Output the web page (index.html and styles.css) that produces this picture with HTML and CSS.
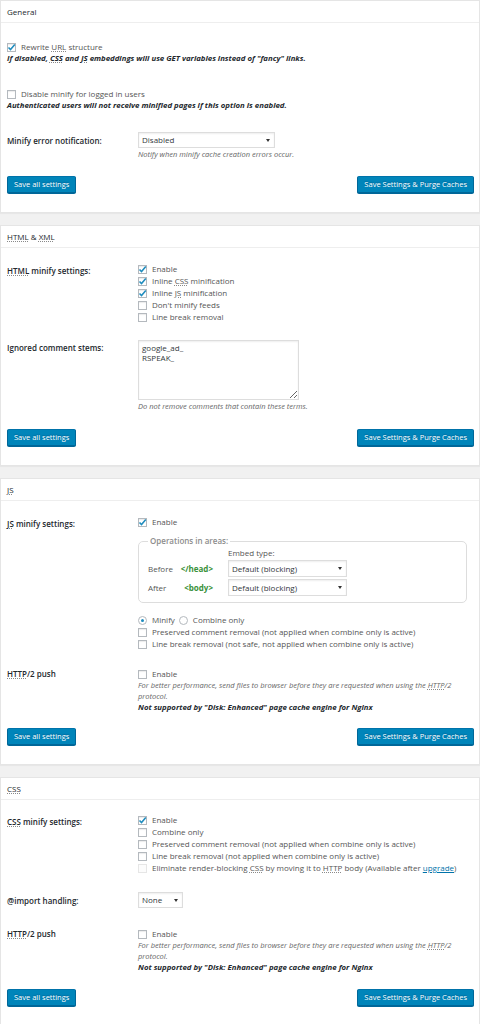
FILE: index.html
```html
<!DOCTYPE html>
<html lang="en">
<head>
<meta charset="utf-8">
<title>Minify settings</title>
<link rel="stylesheet" href="styles.css">
</head>
<body>

<section class="panel panel-general">
  <h3 class="panel-title">General</h3>
  <div class="panel-body">
    <div class="option">
      <label class="check"><span class="cb is-checked"><svg viewBox="0 0 9 9" aria-hidden="true"><path d="M1.5 4.5 3.5 6.6 7.8 1.4"/></svg></span><span>Rewrite <abbr>URL</abbr> structure</span></label>
      <p class="note-strong">If disabled, <abbr>CSS</abbr> and <abbr>JS</abbr> embeddings will use GET variables instead of "fancy" links.</p>
    </div>
    <div class="option">
      <label class="check"><span class="cb"></span><span>Disable minify for logged in users</span></label>
      <p class="note-strong">Authenticated users will not receive minified pages if this option is enabled.</p>
    </div>
    <div class="row row-select">
      <div class="row-label">Minify error notification:</div>
      <div class="row-field">
        <div class="select select-wide"><span>Disabled</span><i class="caret"></i></div>
        <p class="note">Notify when minify cache creation errors occur.</p>
      </div>
    </div>
    <div class="actions">
      <button class="btn" type="button">Save all settings</button>
      <button class="btn" type="button">Save Settings &amp; Purge Caches</button>
    </div>
  </div>
</section>

<section class="panel panel-html">
  <h3 class="panel-title"><abbr>HTML</abbr> &amp; <abbr>XML</abbr></h3>
  <div class="panel-body">
    <div class="row row-checks">
      <div class="row-label"><abbr>HTML</abbr> minify settings:</div>
      <div class="row-field">
        <label class="check"><span class="cb is-checked"><svg viewBox="0 0 9 9" aria-hidden="true"><path d="M1.5 4.5 3.5 6.6 7.8 1.4"/></svg></span><span>Enable</span></label>
        <label class="check"><span class="cb is-checked"><svg viewBox="0 0 9 9" aria-hidden="true"><path d="M1.5 4.5 3.5 6.6 7.8 1.4"/></svg></span><span>Inline <abbr>CSS</abbr> minification</span></label>
        <label class="check"><span class="cb is-checked"><svg viewBox="0 0 9 9" aria-hidden="true"><path d="M1.5 4.5 3.5 6.6 7.8 1.4"/></svg></span><span>Inline <abbr>JS</abbr> minification</span></label>
        <label class="check"><span class="cb"></span><span>Don't minify feeds</span></label>
        <label class="check"><span class="cb"></span><span>Line break removal</span></label>
      </div>
    </div>
    <div class="row row-textarea">
      <div class="row-label">Ignored comment stems:</div>
      <div class="row-field">
        <textarea class="stems" readonly>google_ad_
RSPEAK_</textarea>
        <p class="note">Do not remove comments that contain these terms.</p>
      </div>
    </div>
    <div class="actions">
      <button class="btn" type="button">Save all settings</button>
      <button class="btn" type="button">Save Settings &amp; Purge Caches</button>
    </div>
  </div>
</section>

<section class="panel panel-js">
  <h3 class="panel-title"><abbr>JS</abbr></h3>
  <div class="panel-body">
    <div class="row row-checks">
      <div class="row-label"><abbr>JS</abbr> minify settings:</div>
      <div class="row-field">
        <label class="check"><span class="cb is-checked"><svg viewBox="0 0 9 9" aria-hidden="true"><path d="M1.5 4.5 3.5 6.6 7.8 1.4"/></svg></span><span>Enable</span></label>
        <fieldset class="areas">
          <legend>Operations in areas:</legend>
          <div class="areas-grid">
            <span></span><span></span><span class="embed-head">Embed type:</span>
            <span>Before</span><span class="tag">&lt;/head&gt;</span><div class="select select-embed"><span>Default (blocking)</span><i class="caret"></i></div>
            <span>After</span><span class="tag">&lt;body&gt;</span><div class="select select-embed"><span>Default (blocking)</span><i class="caret"></i></div>
          </div>
        </fieldset>
        <div class="check radios">
          <label class="radio-opt"><span class="radio is-checked"></span><span>Minify</span></label>
          <label class="radio-opt"><span class="radio"></span><span>Combine only</span></label>
        </div>
        <label class="check"><span class="cb"></span><span>Preserved comment removal (not applied when combine only is active)</span></label>
        <label class="check"><span class="cb"></span><span>Line break removal (not safe, not applied when combine only is active)</span></label>
      </div>
    </div>
    <div class="row row-push">
      <div class="row-label"><abbr>HTTP</abbr>/2 push</div>
      <div class="row-field">
        <label class="check"><span class="cb"></span><span>Enable</span></label>
        <p class="note">For better performance, send files to browser before they are requested when using the <abbr>HTTP</abbr>/2 protocol.</p>
        <p class="note-strong">Not supported by "Disk: Enhanced" page cache engine for Nginx</p>
      </div>
    </div>
    <div class="actions">
      <button class="btn" type="button">Save all settings</button>
      <button class="btn" type="button">Save Settings &amp; Purge Caches</button>
    </div>
  </div>
</section>

<section class="panel panel-css">
  <h3 class="panel-title"><abbr>CSS</abbr></h3>
  <div class="panel-body">
    <div class="row row-checks">
      <div class="row-label"><abbr>CSS</abbr> minify settings:</div>
      <div class="row-field">
        <label class="check"><span class="cb is-checked"><svg viewBox="0 0 9 9" aria-hidden="true"><path d="M1.5 4.5 3.5 6.6 7.8 1.4"/></svg></span><span>Enable</span></label>
        <label class="check"><span class="cb"></span><span>Combine only</span></label>
        <label class="check"><span class="cb"></span><span>Preserved comment removal (not applied when combine only is active)</span></label>
        <label class="check"><span class="cb"></span><span>Line break removal (not applied when combine only is active)</span></label>
        <label class="check"><span class="cb is-disabled"></span><span>Eliminate render-blocking <abbr>CSS</abbr> by moving it to <abbr>HTTP</abbr> body (Available after <a href="#upgrade">upgrade</a>)</span></label>
      </div>
    </div>
    <div class="row row-select">
      <div class="row-label">@import handling:</div>
      <div class="row-field">
        <div class="select select-small"><span>None</span><i class="caret"></i></div>
      </div>
    </div>
    <div class="row row-push">
      <div class="row-label"><abbr>HTTP</abbr>/2 push</div>
      <div class="row-field">
        <label class="check"><span class="cb"></span><span>Enable</span></label>
        <p class="note">For better performance, send files to browser before they are requested when using the <abbr>HTTP</abbr>/2 protocol.</p>
        <p class="note-strong">Not supported by "Disk: Enhanced" page cache engine for Nginx</p>
      </div>
    </div>
    <div class="actions">
      <button class="btn" type="button">Save all settings</button>
      <button class="btn" type="button">Save Settings &amp; Purge Caches</button>
    </div>
  </div>
</section>

</body>
</html>
```

FILE: styles.css
```css
* { box-sizing: border-box; }

html { background: #f1f1f1; }

body {
  margin: 0;
  background: #f1f1f1;
  font-family: "Open Sans", "Noto Sans", "DejaVu Sans", sans-serif;
  font-size: 8px;
  line-height: 12px;
  color: #555;
}

abbr {
  text-decoration: underline dotted #8a8a8a;
  text-underline-offset: 1px;
}

a { color: #0073aa; }

/* panels */
.panel {
  background: #fff;
  border: 1px solid #e5e5e5;
  box-shadow: 0 1px 1px rgba(0, 0, 0, .04);
  margin-bottom: 12px;
}

.panel-title {
  margin: 0;
  height: 22px;
  padding: 0 6px;
  font-size: 8px;
  font-weight: 400;
  line-height: 21px;
  color: #23282d;
  border-bottom: 1px solid #eee;
}

.panel-body { padding: 15px 5px 19px 6px; }
.panel-general .panel-body { padding-top: 18px; }
.panel-css .panel-body { padding-top: 14px; }

/* checkboxes / radios */
.check {
  display: flex;
  align-items: center;
  gap: 5px;
  height: 12px;
  white-space: nowrap;
}

.cb {
  flex: none;
  display: flex;
  width: 9px;
  height: 9px;
  border: 1px solid #b4b9be;
  background: #fff;
  box-shadow: inset 0 1px 1px rgba(0, 0, 0, .08);
}

.cb svg {
  display: block;
  width: 9px;
  height: 9px;
  margin: -1px;
  overflow: visible;
}

.cb path {
  fill: none;
  stroke: #1e8cbe;
  stroke-width: 1.5;
}

.cb.is-disabled {
  border-color: #e6e6e6;
  background: #fcfcfc;
  box-shadow: none;
}

.radios { gap: 4px; margin-top: 11px; }

.radio-opt {
  display: flex;
  align-items: center;
  gap: 5px;
}

.radio {
  flex: none;
  display: flex;
  align-items: center;
  justify-content: center;
  width: 9px;
  height: 9px;
  border: 1px solid #b4b9be;
  border-radius: 50%;
  background: #fff;
}

.radio.is-checked::before {
  content: "";
  width: 3px;
  height: 3px;
  border-radius: 50%;
  background: #1e8cbe;
}

/* notes */
.note {
  margin: 0;
  font-size: 7.5px;
  font-style: italic;
  line-height: 11px;
  color: #666;
}

.note-strong {
  margin: 0;
  font-size: 7.8px;
  font-style: italic;
  font-weight: 700;
  line-height: 11px;
  color: #23282d;
}

/* general options */
.option + .option { margin-top: 24px; }
.option + .row { margin-top: 21px; }

/* form rows */
.row {
  display: grid;
  grid-template-columns: 131px 1fr;
}

.row + .row { margin-top: 18px; }
.row-textarea { margin-top: 17px !important; }
.panel-css .row-push { margin-top: 19px; }

.row-label {
  padding-top: 2px;
  font-weight: 600;
  line-height: 12px;
  color: #23282d;
}

.row-select .row-label { padding-top: 1px; line-height: 16px; }
.row-push .row-label { padding-top: 0; }

.row-select .note { margin-top: 1px; }

/* selects */
.select {
  display: flex;
  align-items: center;
  justify-content: space-between;
  height: 16px;
  padding: 0 4px 0 3px;
  border: 1px solid #ddd;
  background: #fff;
  box-shadow: inset 0 1px 2px rgba(0, 0, 0, .07);
  color: #32373c;
  line-height: 14px;
}

.select-wide { width: 137px; }
.select-small { width: 45px; }
.select-embed { width: 119px; height: 17px; }

.caret {
  width: 0;
  height: 0;
  border-left: 2px solid transparent;
  border-right: 2px solid transparent;
  border-top: 3px solid #333;
}

/* textarea */
.stems {
  display: block;
  width: 161px;
  height: 60px;
  margin: 0;
  padding: 2px 3px;
  border: 1px solid #ddd;
  box-shadow: inset 0 1px 2px rgba(0, 0, 0, .07);
  font: inherit;
  line-height: 10px;
  color: #32373c;
  resize: vertical;
}

.row-textarea .note { margin-top: 1px; }

/* operations fieldset */
.areas {
  width: 329px;
  min-width: 0;
  margin: 8px 0 0;
  padding: 2px 9px 6px;
  border: 1px solid #ddd;
  border-radius: 5px;
}

.areas legend {
  padding: 0 2px;
  font-weight: 600;
  line-height: 10px;
  color: #8c8c8c;
}

.areas-grid {
  display: grid;
  grid-template-columns: 32px 48px 119px;
  row-gap: 2px;
  align-items: center;
  line-height: 10px;
}

.tag {
  padding-right: 15px;
  text-align: right;
  font-weight: 700;
  color: #3a913a;
}

/* buttons */
.actions {
  display: flex;
  justify-content: space-between;
  margin-top: 16px;
}

.panel-html .actions { margin-top: 17px; }
.panel-js .actions { margin-top: 15px; }

.btn {
  height: 17px;
  margin: 0;
  padding: 0 6px;
  font-family: inherit;
  font-size: 7.5px;
  line-height: 15px;
  color: #fff;
  background: #0085ba;
  border: 1px solid;
  border-color: #0073aa #006799 #006799;
  border-radius: 2px;
  box-shadow: 0 1px 0 #006799;
  text-shadow: 0 -1px 1px #006799;
  cursor: pointer;
}
```
